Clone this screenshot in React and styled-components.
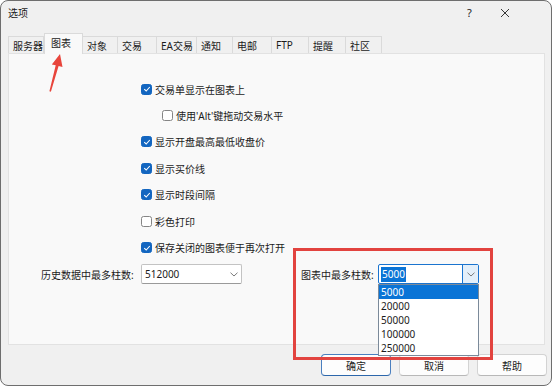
import React from 'react';
import styled, { createGlobalStyle } from 'styled-components';

const GlobalStyle = createGlobalStyle`
  body {
    margin: 0;
    background: #ffffff;
  }
`;

const Window = styled.div`
  position: relative;
  width: 552px;
  height: 386px;
  box-sizing: border-box;
  border: 1px solid #6e6e6e;
  border-radius: 8px;
  background: #f0f0f0;
  overflow: hidden;
  display: flex;
  flex-direction: column;
  font-family: 'Noto Sans', 'Noto Sans CJK SC', sans-serif;
  font-size: 10px;
  color: #1b1b1b;
`;

const TitleBar = styled.div`
  height: 23px;
  display: flex;
  align-items: center;
  padding-left: 7px;
`;

const Title = styled.span`
  font-size: 10px;
`;

const TitleActions = styled.div`
  margin-left: auto;
  display: flex;
  padding-right: 29px;
`;

const TitleButton = styled.span`
  width: 35px;
  display: flex;
  justify-content: center;
  align-items: center;
  font-size: 11px;
  color: #222;
`;

const TabRow = styled.div`
  margin-top: 9px;
  height: 20px;
  display: flex;
  align-items: flex-end;
  padding-left: 7px;
`;

const Tab = styled.div`
  position: relative;
  box-sizing: border-box;
  width: ${p => p.$w}px;
  height: ${p => (p.$active ? 21 : 17)}px;
  margin-bottom: ${p => (p.$active ? -1 : 0)}px;
  padding-left: ${p => (p.$active ? 6 : 4)}px;
  padding-bottom: ${p => (p.$active ? 3 : 0)}px;
  display: flex;
  align-items: center;
  background: ${p => (p.$active ? '#f9f9f9' : '#f0f0f0')};
  border: 1px solid #dadada;
  border-bottom: none;
  border-left-width: ${p => (p.$first || p.$active ? 1 : 0)}px;
  z-index: ${p => (p.$active ? 2 : 1)};
  white-space: nowrap;
`;

const Panel = styled.div`
  margin: 0 6px 0 7px;
  height: 292px;
  box-sizing: border-box;
  border: 1px solid #e2e2e2;
  background: #f9f9f9;
  padding-top: 22px;
`;

const CheckList = styled.div`
  margin-left: 132px;
  display: flex;
  flex-direction: column;
`;

const CheckRow = styled.div`
  height: 26.4px;
  display: flex;
  align-items: center;
  gap: 3px;
  padding-left: ${p => (p.$indent ? 21 : 0)}px;
`;

const Box = styled.span`
  width: 11px;
  height: 11px;
  box-sizing: border-box;
  border-radius: 2.5px;
  display: flex;
  align-items: center;
  justify-content: center;
  background: ${p => (p.$checked ? '#1366c0' : '#ffffff')};
  border: 1px solid ${p => (p.$checked ? '#1366c0' : '#858585')};
`;

const ComboRow = styled.div`
  margin-top: 3.5px;
  padding-left: 32px;
  display: flex;
  align-items: center;
`;

const Field = styled.div`
  display: flex;
  align-items: center;
  margin-left: ${p => p.$offset || 0}px;
`;

const Label = styled.span`
  width: ${p => p.$w}px;
  white-space: nowrap;
`;

const Combo = styled.div`
  position: relative;
  width: 101px;
  height: 20px;
  box-sizing: border-box;
  background: #ffffff;
  border: 1px solid ${p => (p.$focus ? '#1a74cf' : '#c3c3c3')};
  border-bottom-color: ${p => (p.$focus ? '#1a74cf' : '#9a9a9a')};
  border-radius: 2px;
  display: flex;
  align-items: center;
  padding-left: 2px;
`;

const Value = styled.span`
  padding: 0 1px;
  line-height: 15px;
  background: ${p => (p.$selected ? '#0a74d6' : 'transparent')};
  color: ${p => (p.$selected ? '#ffffff' : '#1b1b1b')};
`;

const DropButton = styled.span`
  margin-left: auto;
  width: 15px;
  align-self: stretch;
  display: flex;
  align-items: center;
  justify-content: center;
  background: ${p => (p.$open ? '#e3effa' : 'transparent')};
  border-left: 1px solid ${p => (p.$open ? '#1a74cf' : 'transparent')};
`;

const DropList = styled.div`
  position: absolute;
  top: 19px;
  left: -1px;
  width: 101px;
  box-sizing: border-box;
  background: #ffffff;
  border: 1px solid #7b8a9a;
  z-index: 5;
`;

const DropItem = styled.div`
  height: 14px;
  line-height: 14px;
  padding-left: 2px;
  background: ${p => (p.$selected ? '#0a74d6' : 'transparent')};
  color: ${p => (p.$selected ? '#ffffff' : '#1b1b1b')};
`;

const Footer = styled.div`
  display: flex;
  justify-content: flex-end;
  gap: 8px;
  padding: 9px 4px 0 0;
`;

const Button = styled.button`
  width: 70px;
  height: 22px;
  box-sizing: border-box;
  border: 1px solid ${p => (p.$primary ? '#4a7fbf' : '#d3d3d3')};
  border-bottom-color: ${p => (p.$primary ? '#2d67ab' : '#b8b8b8')};
  border-radius: 4px;
  background: #fdfdfd;
  font-family: inherit;
  font-size: 10px;
  color: #1b1b1b;
  padding: 0;
`;

const Highlight = styled.div`
  position: absolute;
  left: 292px;
  top: 247px;
  width: 200px;
  height: 112px;
  box-sizing: border-box;
  border: 3px solid #e2433f;
  z-index: 10;
  pointer-events: none;
`;

const Pointer = styled.svg`
  position: absolute;
  left: 39px;
  top: 47px;
  z-index: 10;
`;

const Check = () => (
  <svg width="8" height="8" viewBox="0 0 8 8">
    <polyline points="1.2,4.2 3.2,6 6.8,2" fill="none" stroke="#fff" strokeWidth="1.1" />
  </svg>
);

const Chevron = () => (
  <svg width="8" height="5" viewBox="0 0 8 5">
    <polyline points="0.5,0.7 4,4 7.5,0.7" fill="none" stroke="#6b6b6b" strokeWidth="0.9" />
  </svg>
);

const tabs = [
  ['服务器', 36],
  ['图表', 39],
  ['对象', 35],
  ['交易', 39],
  ['EA交易', 40],
  ['通知', 36],
  ['电邮', 39],
  ['FTP', 37],
  ['提醒', 37],
  ['社区', 36],
];

const options = [
  ['交易单显示在图表上', true],
  ["使用'Alt'键拖动交易水平", false, true],
  ['显示开盘最高最低收盘价', true],
  ['显示买价线', true],
  ['显示时段间隔', true],
  ['彩色打印', false],
  ['保存关闭的图表便于再次打开', true],
];

const barChoices = ['5000', '20000', '50000', '100000', '250000'];

export default function App() {
  return (
    <>
      <GlobalStyle />
      <Window>
        <TitleBar>
          <Title>选项</Title>
          <TitleActions>
            <TitleButton>?</TitleButton>
            <TitleButton>
              <svg width="10" height="10" viewBox="0 0 10 10">
                <path d="M1 1 L9 9 M9 1 L1 9" stroke="#222" strokeWidth="0.9" />
              </svg>
            </TitleButton>
          </TitleActions>
        </TitleBar>

        <TabRow>
          {tabs.map(([name, w], i) => (
            <Tab key={name} $w={w} $first={i === 0} $active={i === 1}>
              {name}
            </Tab>
          ))}
        </TabRow>

        <Panel>
          <CheckList>
            {options.map(([text, checked, indent]) => (
              <CheckRow key={text} $indent={indent}>
                <Box $checked={checked}>{checked && <Check />}</Box>
                <span>{text}</span>
              </CheckRow>
            ))}
          </CheckList>

          <ComboRow>
            <Field>
              <Label $w={100}>历史数据中最多柱数:</Label>
              <Combo>
                <Value>512000</Value>
                <DropButton>
                  <Chevron />
                </DropButton>
              </Combo>
            </Field>
            <Field $offset={59}>
              <Label $w={77}>图表中最多柱数:</Label>
              <Combo $focus>
                <Value $selected>5000</Value>
                <DropButton $open>
                  <Chevron />
                </DropButton>
                <DropList>
                  {barChoices.map((v, i) => (
                    <DropItem key={v} $selected={i === 0}>
                      {v}
                    </DropItem>
                  ))}
                </DropList>
              </Combo>
            </Field>
          </ComboRow>
        </Panel>

        <Footer>
          <Button $primary>确定</Button>
          <Button>取消</Button>
          <Button>帮助</Button>
        </Footer>

        <Highlight />
        <Pointer width="30" height="46" viewBox="0 0 30 46">
          <polygon
            points="20,6 22.5,19 18.6,18 10.9,43.7 9.4,43.3 15.7,17.3 11.8,16.4"
            fill="#e8453c"
          />
        </Pointer>
      </Window>
    </>
  );
}
